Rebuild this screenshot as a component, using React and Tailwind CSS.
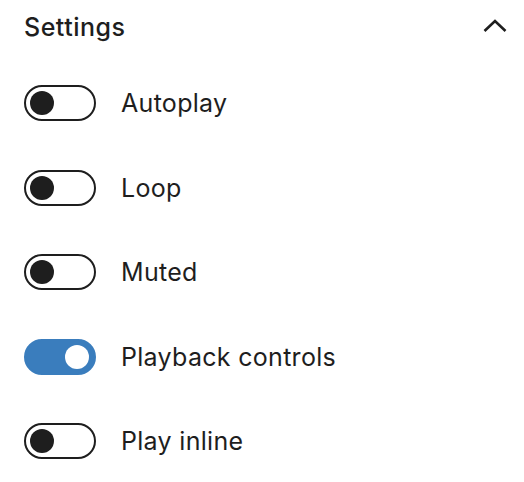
import { useState } from "react";

const options = [
  { label: "Autoplay", on: false },
  { label: "Loop", on: false },
  { label: "Muted", on: false },
  { label: "Playback controls", on: true },
  { label: "Play inline", on: false },
];

function Toggle({ checked, onChange }) {
  return (
    <button
      onClick={onChange}
      className={`relative w-[72px] h-[36px] rounded-full border-2 shrink-0 ${
        checked ? "bg-[#3a7dbd] border-[#3a7dbd]" : "bg-white border-[#1e1e1e]"
      }`}
    >
      <span
        className={`absolute top-[4px] w-[24px] h-[24px] rounded-full ${
          checked ? "left-[39px] bg-white" : "left-[4px] bg-[#1e1e1e]"
        }`}
      />
    </button>
  );
}

export default function App() {
  const [values, setValues] = useState(options.map((o) => o.on));

  return (
    <div className="w-[524px] h-[482px] bg-white font-['Inter',sans-serif] text-[#1e1e1e] px-6">
      {/* Panel header */}
      <div className="flex items-center justify-between h-[56px]">
        <h2 className="text-[25px] font-medium tracking-[0.5px]">Settings</h2>
        <svg width="24" height="14" viewBox="0 0 24 14" className="mr-[-7px] mb-[4px]">
          <path d="M1.5 12 12 2l10.5 10" fill="none" stroke="#1e1e1e" strokeWidth="2.6" />
        </svg>
      </div>

      {/* Toggles */}
      <div className="flex flex-col gap-[48.5px] mt-[29px]">
        {options.map((opt, i) => (
          <div key={opt.label} className="flex items-center gap-[25px] h-[36px]">
            <Toggle
              checked={values[i]}
              onChange={() =>
                setValues((prev) => prev.map((v, j) => (j === i ? !v : v)))
              }
            />
            <span className="text-[25px] leading-[36px] tracking-[0.3px]">{opt.label}</span>
          </div>
        ))}
      </div>
    </div>
  );
}
